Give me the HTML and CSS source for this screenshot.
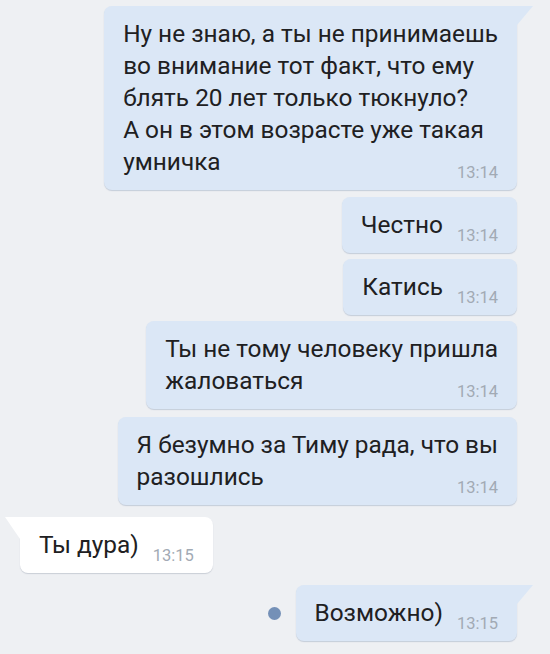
FILE: index.html
```html
<!DOCTYPE html>
<html lang="ru">
<head>
<meta charset="utf-8">
<title>Чат</title>
<link rel="stylesheet" href="styles.css">
</head>
<body>
<div class="chat">
  <div class="msg out first">
    <div class="bubble">Ну не знаю, а ты не принимаешь<br>во внимание тот факт, что ему<br>блять 20 лет только тюкнуло?<br>А он в этом возрасте уже такая<br>умничка<span class="time">13:14</span></div>
  </div>
  <div class="msg out">
    <div class="bubble square">Честно<span class="time">13:14</span></div>
  </div>
  <div class="msg out tight">
    <div class="bubble square">Катись<span class="time">13:14</span></div>
  </div>
  <div class="msg out tight">
    <div class="bubble square">Ты не тому человеку пришла<br>жаловаться<span class="time">13:14</span></div>
  </div>
  <div class="msg out wide">
    <div class="bubble square">Я безумно за Тиму рада, что вы<br>разошлись<span class="time">13:14</span></div>
  </div>
  <div class="msg in">
    <div class="bubble">Ты дура)<span class="time">13:15</span></div>
  </div>
  <div class="msg out last">
    <span class="unread"></span>
    <div class="bubble">Возможно)<span class="time">13:15</span></div>
  </div>
</div>
</body>
</html>
```
FILE: styles.css
```css
html, body {
  margin: 0;
  padding: 0;
  background: #eef0f3;
}
body {
  width: 550px;
  height: 654px;
  overflow: hidden;
  font-family: Roboto, "Noto Sans", sans-serif;
}
.chat {
  display: flex;
  flex-direction: column;
  align-items: flex-end;
  padding: 6px 33px 0 20px;
  gap: 7px;
}
.msg {
  display: flex;
  align-items: center;
}
.msg.tight {
  margin-top: -1px;
}
.msg.wide {
  margin-top: 1px;
}
.msg.in {
  align-self: flex-start;
  margin-top: 5px;
}
.msg.last {
  margin-top: 5px;
  gap: 15px;
}
.bubble {
  position: relative;
  display: flow-root;
  padding: 12px 19px 12px 19px;
  font-size: 24.4px;
  line-height: 32px;
  color: #202022;
  background: #dbe7f6;
  border-radius: 8px;
  box-shadow: 0 1px 1px rgba(120, 140, 170, 0.35);
  white-space: nowrap;
}
.out .bubble:not(.square) {
  border-top-right-radius: 0;
}
.out .bubble:not(.square)::after {
  content: "";
  position: absolute;
  top: 0;
  right: -16px;
  width: 17px;
  height: 19px;
  background: #dbe7f6;
  clip-path: polygon(0 0, 100% 0, 6% 100%, 0 100%);
}
.in .bubble {
  background: #ffffff;
  border-top-left-radius: 0;
  box-shadow: 0 1px 1px rgba(120, 130, 150, 0.3);
}
.in .bubble::before {
  content: "";
  position: absolute;
  top: 0;
  left: -15px;
  width: 16px;
  height: 22px;
  background: #ffffff;
  clip-path: polygon(0 0, 100% 0, 100% 100%, 94% 100%);
}
.time {
  float: right;
  margin: 19px 0 -4px 14px;
  font-size: 16.5px;
  line-height: 16px;
  color: #a2aab4;
}
.unread {
  width: 13px;
  height: 13px;
  border-radius: 50%;
  background: #7490b7;
}
```
